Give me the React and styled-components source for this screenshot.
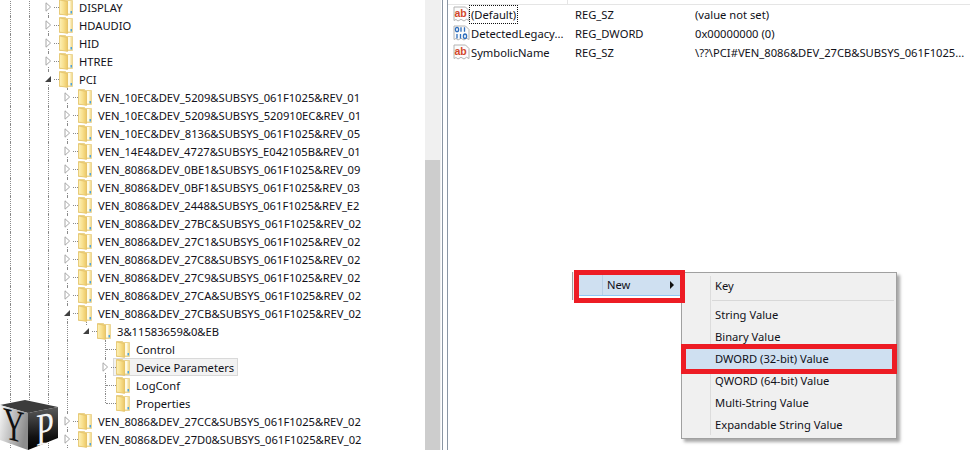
import React from "react"
import styled, { createGlobalStyle } from "styled-components"

const GlobalStyle = createGlobalStyle`
  html, body {
    margin: 0;
    padding: 0;
    background: #fff;
    overflow: hidden;
  }
  * { box-sizing: border-box; }
`

const Window = styled.div`
  position: relative;
  display: flex;
  width: 970px;
  height: 450px;
  overflow: hidden;
  background: #fff;
  color: #101018;
  font-family: "Noto Sans", "Open Sans", sans-serif;
  font-size: 11.2px;
`

/* tree side */
const TreePane = styled.div`
  width: 425px;
  height: 450px;
  overflow: hidden;
  flex: none;
`
const TreeList = styled.div`
  margin-top: -2px;
  padding-left: 10px;
`
const TreeRow = styled.div`
  display: flex;
  height: 18px;
  white-space: nowrap;
`
const Guide = styled.div`
  width: 19px;
  height: 18px;
  flex: none;
  border-left: ${(p) => (p.$blank ? "1px solid transparent" : "1px dotted #8a8a8a")};
`
const Branch = styled.div`
  position: relative;
  width: 11px;
  height: 18px;
  flex: none;
  &::before {
    content: "";
    position: absolute;
    left: 0;
    top: 0;
    height: ${(p) => (p.$last ? "9px" : "18px")};
    border-left: 1px dotted #8a8a8a;
  }
  &::after {
    content: "";
    position: absolute;
    left: 1px;
    right: 0;
    top: 9px;
    border-top: 1px dotted #8a8a8a;
  }
`
const ExpanderSlot = styled.span`
  position: absolute;
  left: -3px;
  top: 3px;
  width: 9px;
  height: 12px;
  z-index: 1;
  background: #fff;
  display: flex;
  align-items: center;
`
const TreeItem = styled.div`
  display: flex;
  align-items: center;
  gap: 6px;
  height: 18px;
  margin-left: -3px;
  padding: 0 3px 0 2px;
  border: 1px solid ${(p) => (p.$selected ? "#d9d9d9" : "transparent")};
  background: ${(p) => (p.$selected ? "#f2f2f2" : "transparent")};
`

const Scrollbar = styled.div`
  width: 16px;
  height: 450px;
  flex: none;
  padding-top: 160px;
  background: #f0f0f0;
`
const ScrollThumb = styled.div`
  width: 15px;
  height: 290px;
  background: #cdcdcd;
`
const Splitter = styled.div`
  width: 6px;
  height: 450px;
  flex: none;
  margin-left: 1px;
  border-left: 1px solid #8a96a3;
  border-right: 1px solid #8a96a3;
`

/* values side */
const ValuesPane = styled.div`
  flex: 1;
  min-width: 0;
  height: 450px;
`
const ListHeader = styled.div`
  height: 5px;
  border-bottom: 1px solid #e5e5e5;
  display: flex;
`
const HeaderCell = styled.div`
  width: 120px;
  border-right: 1px solid #e5e5e5;
`
const ValueRow = styled.div`
  display: grid;
  grid-template-columns: 122px 120px 1fr;
  align-items: center;
  height: 19px;
  padding-left: 5px;
  white-space: nowrap;
`
const NameCell = styled.div`
  display: flex;
  align-items: center;
  gap: 0;
`
const NameText = styled.span`
  padding: 0 1px;
  line-height: 17px;
  outline: ${(p) => (p.$focused ? "1px dotted #111" : "none")};
`

/* context menus */
const ParentMenu = styled.div`
  position: absolute;
  left: 572px;
  top: 272px;
  width: 110px;
  height: 28px;
  padding: 3px 0 0 6px;
  border-left: 1px solid #a0a0a0;
  background: #f0f0f0;
  z-index: 4;
`
const ParentItem = styled.div`
  position: relative;
  display: flex;
  align-items: center;
  width: 101px;
  height: 23px;
  padding-bottom: 4px;
  background: linear-gradient(#cfe0f1 0 20px, #90c8f6 20px 21px, #fff 21px);
`
const ParentIconGutter = styled.div`
  width: 24px;
  height: 20px;
  margin-right: 4px;
  border-right: 1px solid #b8cfe6;
`
const SubArrow = styled.span`
  position: absolute;
  left: 91px;
  top: 6px;
  border-left: 4px solid #111;
  border-top: 4px solid transparent;
  border-bottom: 4px solid transparent;
`
const SubMenu = styled.div`
  position: absolute;
  left: 681px;
  top: 272px;
  width: 216px;
  height: 167px;
  padding: 2px 2px 2px 1px;
  background: #f0f0f0;
  border: 1px solid #a0a0a0;
  box-shadow: 3px 3px 3px rgba(0, 0, 0, 0.35);
  z-index: 3;
`
const MenuRule = styled.div`
  position: absolute;
  left: 28px;
  top: 3px;
  bottom: 3px;
  border-left: 1px solid #dcdcdc;
`
const MenuItem = styled.div`
  position: relative;
  display: flex;
  align-items: center;
  height: 22px;
  padding: 0 0 2px 32px;
  background: ${(p) => (p.$active ? "#cfe0f1" : "transparent")};
`
const MenuSeparator = styled.div`
  height: 7px;
  margin-left: 29px;
  padding-top: 3px;
  &::after {
    content: "";
    display: block;
    border-top: 1px solid #d8d8d8;
  }
`
const RedFrame = styled.div`
  position: absolute;
  inset: ${(p) => p.$inset};
  border: 5px solid #ed1c24;
  z-index: 5;
  pointer-events: none;
`
const Watermark = styled.svg`
  position: absolute;
  left: 0;
  top: 400px;
  z-index: 2;
`

const Folder = () => (
  <svg width="14" height="17" viewBox="0 0 14 17" style={{ flex: "none" }}>
    <defs>
      <linearGradient id="folderFront" x1="0" y1="0" x2="1" y2="0">
        <stop offset="0" stopColor="#fdf1b8" />
        <stop offset="0.5" stopColor="#f8e08e" />
        <stop offset="1" stopColor="#ecc766" />
      </linearGradient>
      <linearGradient id="folderBack" x1="0" y1="0" x2="1" y2="0">
        <stop offset="0" stopColor="#e8c768" />
        <stop offset="1" stopColor="#f6e2a0" />
      </linearGradient>
    </defs>
    <path d="M0.500 0.500h6l1 1h6v14h-13z" fill="url(#folderBack)" stroke="#e2c46e" strokeWidth="0.600" />
    <rect x="9" y="2" width="2.500" height="12.500" fill="#fffbe6" />
    <path d="M0.500 1l8 1.500v14l-8-1.500z" fill="url(#folderFront)" stroke="#e0bd62" strokeWidth="0.600" />
    <rect x="11.500" y="12" width="1.500" height="2.500" fill="#4aa3df" />
  </svg>
)

const Expander = ({ open }) => (
  <svg width="7" height="10" viewBox="0 0 7 10">
    {open ? (
      <path d="M6 2v6h-6z" fill="#404040" />
    ) : (
      <path d="M1 0.800l4.600 4.200-4.600 4.200z" fill="#fff" stroke="#a6a6a6" />
    )}
  </svg>
)

const RegPaper = ({ children }) => (
  <svg width="17" height="17" viewBox="0 0 17 17" style={{ flex: "none" }}>
    <path d="M1 1h11.500l3.500 3.500v10l-2.500-1.200-2.500 1.700-3-1.700-3 1.700-2-1.500-2 1z" fill="#fbfbfb" stroke="#b4b4b4" />
    {children}
  </svg>
)

const StringIcon = () => (
  <RegPaper>
    <text x="1.500" y="11" fontFamily="'Liberation Sans', sans-serif" fontWeight="700" fontSize="10.500" fill="#d2472a">ab</text>
  </RegPaper>
)

const BinaryIcon = () => (
  <RegPaper>
    <g fill="none" stroke="#2f6fbe" strokeWidth="1.300">
      <ellipse cx="4" cy="4.500" rx="1.600" ry="2.200" />
      <path d="M8 2.300v4.500M11.500 2.300v4.500" />
      <path d="M4 9v4.500M7.500 9v4.500" />
      <ellipse cx="12" cy="11.200" rx="1.600" ry="2.200" />
    </g>
  </RegPaper>
)

const TOP = (label) => ({ label, depth: 2, expander: "closed" })
const VEN = (label) => ({ label: `VEN_${label}`, depth: 3, expander: "closed" })

const treeRows = [
  TOP("DISPLAY"),
  TOP("HDAUDIO"),
  TOP("HID"),
  TOP("HTREE"),
  { label: "PCI", depth: 2, expander: "open" },
  VEN("10EC&DEV_5209&SUBSYS_061F1025&REV_01"),
  VEN("10EC&DEV_5209&SUBSYS_520910EC&REV_01"),
  VEN("10EC&DEV_8136&SUBSYS_061F1025&REV_05"),
  VEN("14E4&DEV_4727&SUBSYS_E042105B&REV_01"),
  VEN("8086&DEV_0BE1&SUBSYS_061F1025&REV_09"),
  VEN("8086&DEV_0BF1&SUBSYS_061F1025&REV_03"),
  VEN("8086&DEV_2448&SUBSYS_061F1025&REV_E2"),
  VEN("8086&DEV_27BC&SUBSYS_061F1025&REV_02"),
  VEN("8086&DEV_27C1&SUBSYS_061F1025&REV_02"),
  VEN("8086&DEV_27C8&SUBSYS_061F1025&REV_02"),
  VEN("8086&DEV_27C9&SUBSYS_061F1025&REV_02"),
  VEN("8086&DEV_27CA&SUBSYS_061F1025&REV_02"),
  { label: "VEN_8086&DEV_27CB&SUBSYS_061F1025&REV_02", depth: 3, expander: "open" },
  { label: "3&11583659&0&EB", depth: 4, expander: "open", last: true },
  { label: "Control", depth: 5 },
  { label: "Device Parameters", depth: 5, expander: "closed", selected: true },
  { label: "LogConf", depth: 5 },
  { label: "Properties", depth: 5, last: true },
  VEN("8086&DEV_27CC&SUBSYS_061F1025&REV_02"),
  VEN("8086&DEV_27D0&SUBSYS_061F1025&REV_02"),
]

const values = [
  { icon: <StringIcon />, name: "(Default)", type: "REG_SZ", data: "(value not set)", focused: true },
  { icon: <BinaryIcon />, name: "DetectedLegacy...", type: "REG_DWORD", data: "0x00000000 (0)" },
  { icon: <StringIcon />, name: "SymbolicName", type: "REG_SZ", data: "\\??\\PCI#VEN_8086&DEV_27CB&SUBSYS_061F1025..." },
]

const App = () => {
  return (
    <Window>
      <GlobalStyle />
      <TreePane>
        <TreeList>
          {treeRows.map((row, i) => (
            <TreeRow key={i}>
              {Array.from({ length: row.depth }, (_, level) => (
                <Guide key={level} $blank={level === 4} />
              ))}
              <Branch $last={row.last}>
                {row.expander && (
                  <ExpanderSlot>
                    <Expander open={row.expander === "open"} />
                  </ExpanderSlot>
                )}
              </Branch>
              <TreeItem $selected={row.selected}>
                <Folder />
                <span>{row.label}</span>
              </TreeItem>
            </TreeRow>
          ))}
        </TreeList>
      </TreePane>
      <Scrollbar>
        <ScrollThumb />
      </Scrollbar>
      <Splitter />
      <ValuesPane>
        <ListHeader>
          <HeaderCell />
        </ListHeader>
        {values.map((v) => (
          <ValueRow key={v.name}>
            <NameCell>
              {v.icon}
              <NameText $focused={v.focused}>{v.name}</NameText>
            </NameCell>
            <span>{v.type}</span>
            <span>{v.data}</span>
          </ValueRow>
        ))}
      </ValuesPane>

      <SubMenu>
        <MenuRule />
        <MenuItem>Key</MenuItem>
        <MenuSeparator />
        <MenuItem>String Value</MenuItem>
        <MenuItem>Binary Value</MenuItem>
        <MenuItem $active>
          DWORD (32-bit) Value
          <RedFrame $inset="-4px -3px -4px -2px" />
        </MenuItem>
        <MenuItem>QWORD (64-bit) Value</MenuItem>
        <MenuItem>Multi-String Value</MenuItem>
        <MenuItem>Expandable String Value</MenuItem>
      </SubMenu>
      <ParentMenu>
        <ParentItem>
          <ParentIconGutter />
          New
          <SubArrow />
          <RedFrame $inset="-5px" />
        </ParentItem>
      </ParentMenu>

      <Watermark width="58" height="50" viewBox="0 0 58 50">
        <defs>
          <linearGradient id="cubeLeft" x1="0" y1="0" x2="1" y2="0.3">
            <stop offset="0" stopColor="#f6f6f6" />
            <stop offset="1" stopColor="#8c8c8c" />
          </linearGradient>
          <linearGradient id="cubeRight" x1="0" y1="0" x2="0" y2="1">
            <stop offset="0" stopColor="#5a5a5a" />
            <stop offset="0.7" stopColor="#111" />
            <stop offset="1" stopColor="#000" />
          </linearGradient>
        </defs>
        <path d="M0 5L25 0L58 7L28 13z" fill="#3c3c3c" />
        <path d="M0 5L28 13V50L0 40z" fill="url(#cubeLeft)" />
        <path d="M28 13L58 7V38L28 50z" fill="url(#cubeRight)" />
        <text transform="translate(3 38) skewY(14) scale(0.65 1)" fontFamily="'Liberation Serif', serif" fontSize="46" fill="#111">Y</text>
        <text transform="translate(36 46) skewY(-12) scale(0.7 1)" fontFamily="'Liberation Serif', serif" fontSize="46" fill="#f4f4f4">P</text>
      </Watermark>
    </Window>
  )
}

export default App
